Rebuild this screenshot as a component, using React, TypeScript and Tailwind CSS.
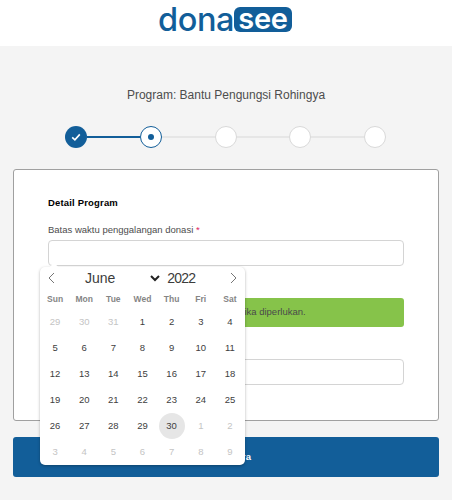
import React from "react";

const weeks = [
  [[29, 0], [30, 0], [31, 0], [1, 1], [2, 1], [3, 1], [4, 1]],
  [[5, 1], [6, 1], [7, 1], [8, 1], [9, 1], [10, 1], [11, 1]],
  [[12, 1], [13, 1], [14, 1], [15, 1], [16, 1], [17, 1], [18, 1]],
  [[19, 1], [20, 1], [21, 1], [22, 1], [23, 1], [24, 1], [25, 1]],
  [[26, 1], [27, 1], [28, 1], [29, 1], [30, 2], [1, 0], [2, 0]],
  [[3, 0], [4, 0], [5, 0], [6, 0], [7, 0], [8, 0], [9, 0]],
];
const days = ["Sun", "Mon", "Tue", "Wed", "Thu", "Fri", "Sat"];

function Step({ state }: { state: "done" | "active" | "todo" }) {
  if (state === "done")
    return (
      <div className="w-[22px] h-[22px] rounded-full bg-[#125e99] flex items-center justify-center shrink-0">
        <svg width="12" height="12" viewBox="0 0 12 12" fill="none" stroke="white" strokeWidth="1.6">
          <path d="M2.2 6.3 L4.9 8.9 L9.8 3.4" />
        </svg>
      </div>
    );
  if (state === "active")
    return (
      <div className="w-[22px] h-[22px] rounded-full bg-white border border-[#125e99] flex items-center justify-center shrink-0">
        <div className="w-[6px] h-[6px] rounded-full bg-[#125e99]" />
      </div>
    );
  return <div className="w-[22px] h-[22px] rounded-full bg-white border border-[#d9d9d9] shrink-0" />;
}

export default function App() {
  return (
    <div className="relative w-[452px] h-[500px] overflow-hidden bg-[#f4f4f4] font-['Liberation_Sans',sans-serif] text-[#404040]">
      <header className="h-[46px] bg-white flex items-start justify-center pt-[7px] pr-[2px]">
        <div className="flex items-center h-[25px]">
          <span className="w-[76px] text-[32.5px] leading-[25px] font-medium text-[#125e99] font-['Inter',sans-serif] tracking-[-0.4px]">dona</span>
          <span className="h-[25px] w-[58px] rounded-[6px] bg-[#125e99] text-white text-[29px] leading-[23px] font-semibold font-['Inter',sans-serif] text-center tracking-[-0.3px]">see</span>
        </div>
      </header>

      <p className="mt-[41px] text-center text-[12px] leading-[16px] text-[#4d4d4d]">
        Program: Bantu Pengungsi Rohingya
      </p>

      <div className="mt-[23px] mx-[65px] w-[321px] flex items-center">
        <Step state="done" />
        <div className="flex-1 h-[2px] bg-[#125e99]" />
        <Step state="active" />
        <div className="flex-1 h-[2px] bg-[#e6e6e6]" />
        <Step state="todo" />
        <div className="flex-1 h-[2px] bg-[#e6e6e6]" />
        <Step state="todo" />
        <div className="flex-1 h-[2px] bg-[#e6e6e6]" />
        <Step state="todo" />
      </div>

      <section className="mt-[21px] mx-[13px] h-[252px] bg-white border border-[#a0a0a0] rounded-[3px] px-[34px] pt-[27px]">
        <h2 className="text-[9.5px] leading-[12px] font-bold tracking-[0.17px] text-black">Detail Program</h2>
        <label className="block mt-[15px] text-[9.5px] leading-[12px] text-[#4d4d4d]">
          Batas waktu penggalangan donasi <span className="text-[#e0245e]">*</span>
        </label>
        <div className="mt-[4px] h-[26px] rounded-[4px] border border-[#d4d4d4] bg-white" />
        <div className="mt-[32px] h-[29px] rounded-[3px] bg-[#86c34a] pl-[20px] flex items-center text-[9.5px] text-[#4a4a4a]">
          Tanggal berakhir dapat diperpanjang lagi jika diperlukan.
        </div>
        <div className="mt-[32px] h-[26px] rounded-[4px] border border-[#d4d4d4] bg-white" />
      </section>

      <button className="mt-[16px] mx-[13px] w-[426px] h-[40px] rounded-[3px] bg-[#125e99] text-white text-[9.5px] font-bold tracking-[0.2px] flex items-center justify-center">
        Sementara
      </button>

      <div className="absolute left-[40px] top-[267px] w-[205px] h-[198px] rounded-[5px] bg-white shadow-[0_1px_3px_rgba(0,0,0,0.3)]">
        <div className="absolute -top-[3px] left-[11px] w-[6px] h-[6px] rotate-45 bg-white" />
        <div className="relative h-[22px] flex items-center">
          <svg className="ml-[8px] shrink-0" width="7" height="12" viewBox="0 0 7 12" fill="none" stroke="#666" strokeWidth="0.9">
            <path d="M6 1 L1 6 L6 11" />
          </svg>
          <span className="ml-[30px] text-[14px] leading-[22px] text-[#3c3c3c]">June</span>
          <svg className="ml-[35px] shrink-0" width="10" height="7" viewBox="0 0 10 7" fill="none" stroke="#222" strokeWidth="2">
            <path d="M1 1 L5 5 L9 1" />
          </svg>
          <span className="ml-[7px] text-[14px] leading-[22px] tracking-[-0.8px] text-[#3c3c3c]">2022</span>
          <svg className="ml-[35px] shrink-0" width="7" height="12" viewBox="0 0 7 12" fill="none" stroke="#666" strokeWidth="0.9">
            <path d="M1 1 L6 6 L1 11" />
          </svg>
        </div>
        <div className="mt-[3px] grid grid-cols-7 h-[14px] px-[0.5px] text-center text-[8.5px] leading-[14px] font-bold text-[#858585]">
          {days.map((d) => (
            <span key={d}>{d}</span>
          ))}
        </div>
        <div className="mt-[3px] grid grid-cols-7 auto-rows-[26px] px-[0.5px] text-[9.5px]">
          {weeks.flat().map(([n, kind], i) => (
            <div key={i} className="flex items-center justify-center">
              <span
                className={
                  kind === 2
                    ? "w-[26px] h-[26px] rounded-full bg-[#e6e6e6] flex items-center justify-center text-[#404040]"
                    : kind === 1
                    ? "text-[#404040]"
                    : "text-[#c4c4c4]"
                }
              >
                {n}
              </span>
            </div>
          ))}
        </div>
      </div>
    </div>
  );
}
